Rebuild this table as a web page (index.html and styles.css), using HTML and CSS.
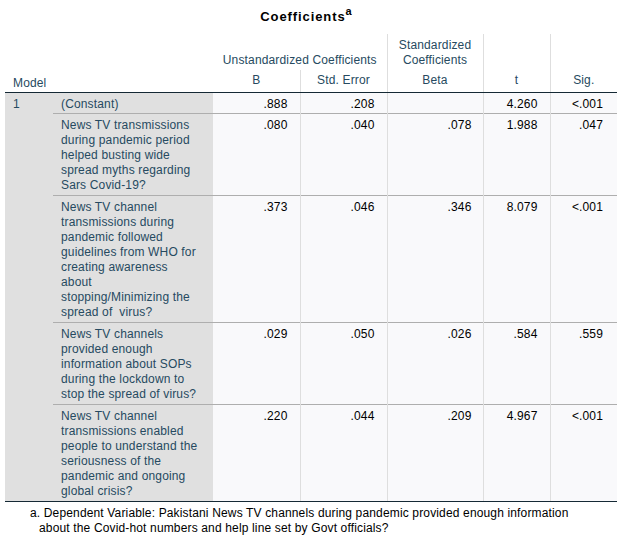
FILE: index.html
```html
<!DOCTYPE html>
<html>
<head>
<meta charset="utf-8">
<link rel="stylesheet" href="styles.css">
</head>
<body>
<div class="title">Coefficients<sup>a</sup></div>
<table class="coef">
  <colgroup>
    <col class="c-model"><col class="c-label"><col class="c-b"><col class="c-se"><col class="c-beta"><col class="c-t"><col class="c-sig">
  </colgroup>
  <thead>
    <tr class="h1">
      <th colspan="2" rowspan="2" class="model">Model</th>
      <th colspan="2" class="grp">Unstandardized Coefficients</th>
      <th class="grp vl">Standardized<br>Coefficients</th>
      <th rowspan="2" class="sub vl">t</th>
      <th rowspan="2" class="sub vl">Sig.</th>
    </tr>
    <tr class="h2">
      <th class="sub">B</th>
      <th class="sub vl">Std. Error</th>
      <th class="sub vl">Beta</th>
    </tr>
  </thead>
  <tbody>
    <tr class="first">
      <td rowspan="5" class="m">1</td>
      <td class="lbl">(Constant)</td>
      <td class="num">.888</td>
      <td class="num vl">.208</td>
      <td class="num vl beta"></td>
      <td class="num vl">4.260</td>
      <td class="num vl sig">&lt;.001</td>
    </tr>
    <tr>
      <td class="lbl">News TV transmissions<br>during pandemic period<br>helped busting wide<br>spread myths regarding<br>Sars Covid-19?</td>
      <td class="num">.080</td>
      <td class="num vl">.040</td>
      <td class="num vl beta">.078</td>
      <td class="num vl">1.988</td>
      <td class="num vl sig">.047</td>
    </tr>
    <tr>
      <td class="lbl">News TV channel<br>transmissions during<br>pandemic followed<br>guidelines from WHO for<br>creating awareness<br>about<br>stopping/Minimizing the<br>spread of&nbsp; virus?</td>
      <td class="num">.373</td>
      <td class="num vl">.046</td>
      <td class="num vl beta">.346</td>
      <td class="num vl">8.079</td>
      <td class="num vl sig">&lt;.001</td>
    </tr>
    <tr>
      <td class="lbl">News TV channels<br>provided enough<br>information about SOPs<br>during the lockdown to<br>stop the spread of virus?</td>
      <td class="num">.029</td>
      <td class="num vl">.050</td>
      <td class="num vl beta">.026</td>
      <td class="num vl">.584</td>
      <td class="num vl sig">.559</td>
    </tr>
    <tr class="last">
      <td class="lbl">News TV channel<br>transmissions enabled<br>people to understand the<br>seriousness of the<br>pandemic and ongoing<br>global crisis?</td>
      <td class="num">.220</td>
      <td class="num vl">.044</td>
      <td class="num vl beta">.209</td>
      <td class="num vl">4.967</td>
      <td class="num vl sig">&lt;.001</td>
    </tr>
  </tbody>
</table>
<div class="foot">a. Dependent Variable: Pakistani News TV channels during pandemic provided enough information<br>about the Covid-hot numbers and help line set by Govt officials?</div>
</body>
</html>
```

FILE: styles.css
```css
body {
  margin: 0;
  background: #ffffff;
  font-family: "Liberation Sans", Arial, sans-serif;
  color: #000000;
}

.title {
  width: 602px;
  margin-left: 5px;
  padding-right: 10px;
  height: 34px;
  line-height: 34px;
  text-align: center;
  font-weight: bold;
  font-size: 13px;
  letter-spacing: 0.9px;
}

.title sup {
  font-size: 11px;
  line-height: 0;
  vertical-align: 6px;
  letter-spacing: 0;
}

.coef {
  border-collapse: collapse;
  table-layout: fixed;
  width: 612px;
  margin-left: 5px;
  font-size: 12px;
  letter-spacing: 0.15px;
}

.c-model { width: 48px; }
.c-label { width: 160px; }
.c-b { width: 87px; }
.c-se { width: 87px; }
.c-beta { width: 96px; }
.c-t { width: 67px; }
.c-sig { width: 67px; }

.coef th,
.coef td {
  padding: 0;
  line-height: 15px;
  white-space: nowrap;
}

.coef th {
  font-weight: normal;
  color: #264a60;
  text-align: center;
  vertical-align: bottom;
  background: #ffffff;
}

.h1 { height: 36px; }
.h2 { height: 22px; }

.h1 .grp { padding-bottom: 2px; }
.coef th.sub { padding-bottom: 4px; }
.coef th.model {
  text-align: left;
  padding-left: 8px;
  padding-bottom: 1px;
}

.coef th.vl,
.coef td.vl {
  border-left: 1px solid #dedede;
}

.h2 th,
.h1 th.model,
.h1 th[rowspan] {
  border-bottom: 1px solid #152935;
}

.coef td {
  vertical-align: top;
  padding-top: 4px;
  padding-bottom: 2px;
}

.coef td.m {
  background: #e0e0e0;
  color: #264a60;
  padding-left: 8px;
}

.coef td.lbl {
  background: #e0e0e0;
  color: #264a60;
  padding-left: 8px;
}

.coef td.num {
  background: #f9f9fb;
  text-align: right;
  padding-right: 12px;
  color: #000000;
}

.coef td.beta { padding-right: 11px; }
.coef td.sig { padding-right: 14px; }

.coef tbody tr + tr td {
  border-top: 1px solid #aeaeae;
}

.coef tr.first td { padding-bottom: 1px; }

.coef tr.last td,
.coef td.m {
  border-bottom: 1px solid #152935;
}

.foot {
  padding-top: 4px;
  padding-left: 39px;
  text-indent: -9px;
  font-size: 12px;
  line-height: 15px;
  letter-spacing: 0.15px;
  color: #000000;
}
```
